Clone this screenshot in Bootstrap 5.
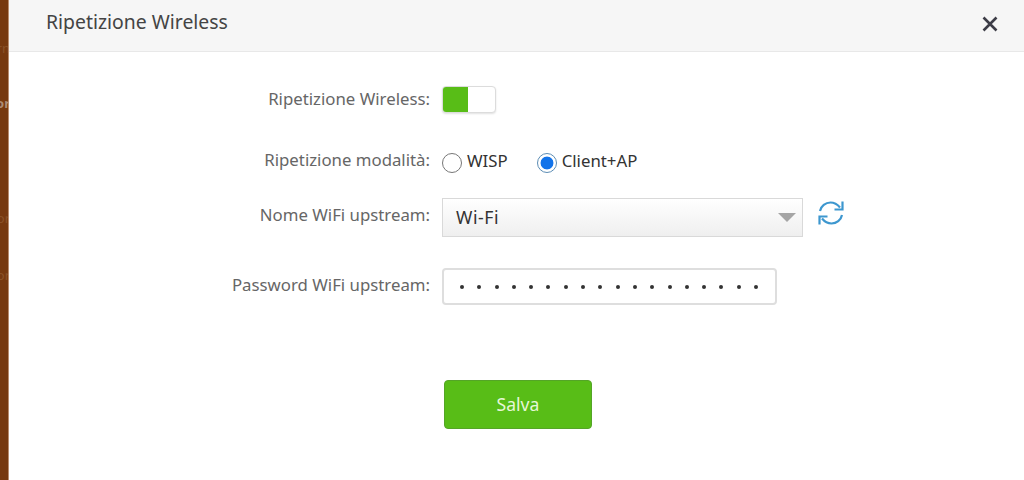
<!DOCTYPE html>
<html lang="it">
<head>
    <meta charset="UTF-8">
    <meta name="viewport" content="width=device-width, initial-scale=1.0">
    <title>Ripetizione Wireless</title>
    <link href="https://cdn.jsdelivr.net/npm/bootstrap@5.3.0/dist/css/bootstrap.min.css" rel="stylesheet">
    <style>
        html, body {
            height: 480px;
            overflow: hidden;
        }
        body {
            background: #fff;
            font-family: "Noto Sans", "Liberation Sans", sans-serif;
            color: #333;
        }
        .side-strip {
            width: 9px;
            background: #77390f;
            border-right: 1px solid #b98d6e;
            position: relative;
            overflow: hidden;
            flex-shrink: 0;
        }
        .strip-ghost {
            position: absolute;
            right: -2px;
            font-size: 13px;
            line-height: 16px;
            color: #9c7458;
        }
        .strip-ghost.g1 { top: 40px; color: #8a5228; }
        .strip-ghost.g2 { top: 95px; font-weight: 700; color: #ac8c76; }
        .strip-ghost.g3 { top: 210px; color: #8a5228; }
        .strip-ghost.g4 { top: 267px; color: #8a5228; }
        .dialog-head {
            height: 52px;
            background: #f6f6f6;
            border-bottom: 1px solid #e8e8e8;
            padding: 0 26px 8px 37px;
        }
        .dialog-title {
            font-size: 19.4px;
            font-weight: 400;
            color: #444;
        }
        .close-x {
            background: none;
            border: 0;
            padding: 0;
            margin-top: 4px;
            line-height: 0;
        }
        .form-area {
            padding-top: 34px;
        }
        .field-row {
            display: flex;
            align-items: center;
        }
        .field-label {
            width: 421px;
            margin: 0 12px 0 0;
            text-align: right;
            font-size: 16.8px;
            color: #666;
            flex-shrink: 0;
        }
        .r-toggle { height: 27px; margin-bottom: 35px; }
        .r-toggle .field-label { padding-bottom: 2px; }
        .r-radio { height: 28px; margin-bottom: 22px; }
        .r-radio .field-label { padding-bottom: 4px; }
        .r-select { height: 39px; margin-bottom: 31px; }
        .r-select .field-label { padding-bottom: 6px; }
        .r-pass { height: 37px; margin-bottom: 75px; }
        .r-pass .field-label { padding-bottom: 4px; }
        .sw-box {
            width: 54px;
            height: 27px;
            border: 1px solid #dcdcdc;
            border-radius: 4px;
            background: #fff;
            box-shadow: 0 1px 2px rgba(0, 0, 0, .12);
        }
        .sw-on {
            width: 25px;
            height: 100%;
            background: #58bd17;
            border-radius: 3px 0 0 3px;
        }
        .radio-opt {
            display: flex;
            align-items: center;
            gap: 5px;
            font-size: 16.8px;
            color: #333;
            margin-right: 29px;
        }
        .radio-opt .form-check-input {
            width: 20px;
            height: 20px;
            margin: 1px 0 0;
            border-color: #777;
        }
        .radio-opt .form-check-input:checked {
            background-color: #fff;
            background-image: radial-gradient(circle, #1273ea 0 6px, #fff 6.8px);
            border-color: #5c8db5;
        }
        .radio-opt span {
            margin-top: -3px;
        }
        .select-fake {
            width: 361px;
            height: 39px;
            padding: 0 13px;
            border: 1px solid #d9d9d9;
            background: linear-gradient(#fff, #efefef);
            font-size: 17.6px;
            color: #333;
        }
        .select-fake > span:first-child {
            letter-spacing: .6px;
            margin-top: -1px;
        }
        .select-caret {
            width: 0;
            height: 0;
            border-left: 9px solid transparent;
            border-right: 9px solid transparent;
            border-top: 9px solid #a5a5a5;
            margin-right: -7px;
        }
        .refresh-icon {
            margin: -9px 0 0 14px;
        }
        .pass-input {
            width: 335px;
            height: 37px;
            border: 2px solid #dedede;
            border-radius: 4px;
            padding: 0 16px;
            gap: 13.3px;
        }
        .pass-dot {
            width: 4px;
            height: 4px;
            border-radius: 50%;
            background: #333;
            flex-shrink: 0;
        }
        .btn-save {
            margin-left: 435px;
            width: 148px;
            height: 49px;
            background: #58bd17;
            border: 1px solid #54a527;
            border-radius: 4px;
            color: #e6f7d8;
            font-size: 17.6px;
        }
    </style>
</head>
<body class="d-flex">
    <div class="side-strip">
        <span class="strip-ghost g1">rn</span>
        <span class="strip-ghost g2">or</span>
        <span class="strip-ghost g3">or</span>
        <span class="strip-ghost g4">or</span>
    </div>
    <div class="flex-grow-1">
        <div class="dialog-head d-flex align-items-center justify-content-between">
            <h1 class="dialog-title m-0">Ripetizione Wireless</h1>
            <button class="close-x" type="button" aria-label="Chiudi">
                <svg width="16" height="16" viewBox="0 0 16 16"><path d="M1.500 1.500 14.500 14.500M14.500 1.500 1.500 14.500" stroke="#3d3d47" stroke-width="2.600" fill="none"/></svg>
            </button>
        </div>
        <form class="form-area">
            <div class="field-row r-toggle">
                <label class="field-label">Ripetizione Wireless:</label>
                <div class="sw-box"><div class="sw-on"></div></div>
            </div>
            <div class="field-row r-radio">
                <label class="field-label">Ripetizione modalità:</label>
                <label class="radio-opt"><input class="form-check-input" type="radio" name="modo"><span>WISP</span></label>
                <label class="radio-opt"><input class="form-check-input" type="radio" name="modo" checked><span>Client+AP</span></label>
            </div>
            <div class="field-row r-select">
                <label class="field-label">Nome WiFi upstream:</label>
                <div class="select-fake d-flex align-items-center justify-content-between">
                    <span>Wi-Fi</span>
                    <span class="select-caret"></span>
                </div>
                <svg class="refresh-icon" width="28" height="28" viewBox="0 0 28 28" fill="none" stroke="#3d97cf" stroke-width="2.200">
                    <path d="M3 12C4 7 8.500 3.500 13.500 3.500 17.500 3.500 20.500 5.500 23 8.500"/>
                    <path d="M25.500 2.500V10.500H17.500"/>
                    <path d="M25 16C24 21 19.500 24.500 14.500 24.500 10.500 24.500 7.500 22.500 5 19.500"/>
                    <path d="M2.500 25.500V17.500H10.500"/>
                </svg>
            </div>
            <div class="field-row r-pass">
                <label class="field-label">Password WiFi upstream:</label>
                <div class="pass-input d-flex align-items-center" id="passBox"></div>
            </div>
            <button class="btn btn-save" type="button">Salva</button>
        </form>
    </div>
    <script src="https://cdn.jsdelivr.net/npm/bootstrap@5.3.0/dist/js/bootstrap.bundle.min.js"></script>
    <script>
        // 18 pallini della password
        let box = document.getElementById("passBox");
        for (let i = 0; i < 18; i++) {
            let dot = document.createElement("span");
            dot.className = "pass-dot";
            box.appendChild(dot);
        }
    </script>
</body>
</html>
